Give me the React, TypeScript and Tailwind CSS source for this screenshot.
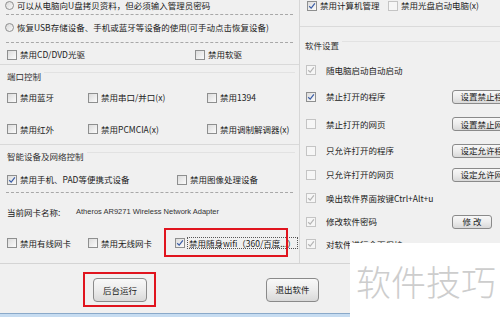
import clsx from "clsx"

function Box({ checked = false, light = false }: { checked?: boolean; light?: boolean }) {
  return (
    <span
      className={clsx(
        "inline-flex h-[10px] w-[10px] shrink-0 items-center justify-center border",
        light ? "border-[#c4c4c4] bg-[#f6f6f6]" : "border-[#8e8f8f] bg-gradient-to-br from-[#dcdcdc] to-[#fbfbfb]"
      )}
    >
      {checked && (
        <svg viewBox="0 0 10 10" className="h-[8px] w-[8px]">
          <path d="M1.5 5.3 L4 7.7 L8.6 1.8" fill="none" stroke={light ? "#b5b5b5" : "#3a5da6"} strokeWidth="1.5" />
        </svg>
      )}
    </span>
  )
}

function Radio() {
  return <span className="inline-block h-[9px] w-[9px] shrink-0 rounded-full border border-[#8e8f8f] bg-gradient-to-br from-[#d8d8d8] to-[#fafafa]" />
}

function Check({ label, checked = false, className }: { label: string; checked?: boolean; className?: string }) {
  return (
    <div className={clsx("flex items-center gap-[3px]", className)}>
      <Box checked={checked} />
      <span>{label}</span>
    </div>
  )
}

function Heading({ text }: { text: string }) {
  return (
    <div className="flex items-center gap-[3px] pr-[4px]">
      <span className="text-[#333]">{text}</span>
      <span className="mb-[8px] h-px flex-1 bg-[#e2e2e2]" />
    </div>
  )
}

function Btn({ text, className }: { text: string; className?: string }) {
  return (
    <div
      className={clsx(
        "flex shrink-0 items-center justify-center rounded-[3px] border border-[#8a8a8a] bg-gradient-to-b from-[#f8f8f8] via-[#ececec] to-[#d9d9d9] text-[#222]",
        className
      )}
    >
      {text}
    </div>
  )
}

const rightRows = [
  { h: "h-[26px]", label: "随电脑启动自动启动", checked: true, light: true, btn: "" },
  { h: "h-[27px]", label: "禁止打开的程序", checked: true, light: false, btn: "设置禁止程序" },
  { h: "h-[28px]", label: "禁止打开的网页", checked: false, light: true, btn: "设置禁止网页" },
  { h: "h-[25px]", label: "只允许打开的程序", checked: false, light: true, btn: "设定允许程序" },
  { h: "h-[23px]", label: "只允许打开的网页", checked: false, light: true, btn: "设定允许网页" },
  { h: "h-[24px]", label: "唤出软件界面按键Ctrl+Alt+u", checked: true, light: true, btn: "" },
  { h: "h-[23px]", label: "修改软件密码", checked: true, light: true, btn: "修 改" },
  { h: "h-[22px]", label: "对软件进行全面保护", checked: true, light: true, btn: "" },
]

export default function App() {
  return (
    <div className="relative h-[317px] w-[500px] overflow-hidden bg-[#f0f0f0] font-['Noto_Sans_CJK_SC',sans-serif] text-[8.5px] leading-none text-[#222]">
      <div className="flex h-[264px] border-b border-[#d4d4d4]">
        {/* left column */}
        <div className="flex w-[300px] shrink-0 flex-col border-r border-[#d6d6d6]">
          <div className="flex h-[14px] items-center gap-[3px] pb-[3px] pl-[5px]">
            <Radio />
            <span>可以从电脑向U盘拷贝资料，但必须输入管理员密码</span>
          </div>
          <div className="mx-[6px] border-t border-dashed border-[#a8a8a8]" />
          <div className="flex h-[27px] items-center gap-[3px] pb-[3px] pl-[5px]">
            <Radio />
            <span className="whitespace-nowrap">恢复USB存储设备、手机或蓝牙等设备的使用(可手动点击恢复设备)</span>
          </div>
          <div className="mx-[6px] border-t border-dashed border-[#a8a8a8]" />
          <div className="flex h-[21px] items-center pt-[2px] pl-[7px]">
            <Check label="禁用CD/DVD光驱" className="w-[188px]" />
            <Check label="禁用软驱" />
          </div>
          <div className="border-t border-[#d9d9d9]" />
          <div className="flex h-[22px] flex-col justify-center pl-[7px]">
            <Heading text="端口控制" />
          </div>
          <div className="flex h-[21px] items-center pl-[7px]">
            <Check label="禁用蓝牙" className="w-[81px]" />
            <Check label="禁用串口/并口(x)" className="w-[119px]" />
            <Check label="禁用1394" />
          </div>
          <div className="flex h-[36px] items-center pt-[6px] pl-[7px]">
            <Check label="禁用红外" className="w-[81px]" />
            <Check label="禁用PCMCIA(x)" className="w-[119px]" />
            <Check label="禁用调制解调器(x)" />
          </div>
          <div className="border-t border-[#d9d9d9]" />
          <div className="flex h-[22px] flex-col justify-center pl-[7px]">
            <Heading text="智能设备及网络控制" />
          </div>
          <div className="flex h-[25px] items-center pl-[7px]">
            <Check label="禁用手机、PAD等便携式设备" checked className="w-[170px]" />
            <Check label="禁用图像处理设备" />
          </div>
          <div className="mx-[6px] border-t border-dashed border-[#a8a8a8]" />
          <div className="flex h-[38px] items-center pl-[7px]">
            <span className="w-[69px]">当前网卡名称:</span>
            <span className="font-['Liberation_Sans',sans-serif] text-[7.5px] text-[#333]">Atheros AR9271 Wireless Network Adapter</span>
          </div>
          <div className="flex h-[32px] items-start pl-[7px]">
            <Check label="禁用有线网卡" className="h-[24px] w-[81px]" />
            <Check label="禁用无线网卡" className="h-[24px] w-[87px]" />
            <div className="relative flex h-[24px] items-center gap-[2px]">
              <Box checked />
              <span className="border border-dotted border-[#555] px-[1px] py-[1px]">禁用随身wifi（360/百度...）</span>
              <div className="absolute -left-[11px] -top-[3px] h-[29px] w-[124px] border-2 border-[#e0141e]" />
            </div>
          </div>
        </div>

        {/* right column */}
        <div className="flex flex-1 flex-col">
          <div className="h-[27px] border-b border-[#dadada]">
            <div className="flex h-[14px] items-center pb-[3px] pl-[7px]">
              <Check label="禁用计算机管理" checked className="w-[81px]" />
              <div className="flex items-center gap-[3px]">
                <Box light />
                <span>禁用光盘启动电脑(x)</span>
              </div>
            </div>
          </div>
          <div className="flex h-[30px] flex-col justify-center pt-[6px] pl-[5px]">
            <Heading text="软件设置" />
          </div>
          {rightRows.map((r) => (
            <div key={r.label} className={clsx("flex items-center pl-[6px]", r.h)}>
              <div className="flex w-[146px] shrink-0 items-center gap-[10px]">
                <Box checked={r.checked} light={r.light} />
                <span className="whitespace-nowrap">{r.label}</span>
              </div>
              {r.btn && <Btn text={r.btn} className={clsx("h-[14px]", r.btn === "修 改" ? "w-[40px]" : "w-[68px]")} />}
            </div>
          ))}
        </div>
      </div>

      {/* bottom bar */}
      <div className="flex h-[49px] items-center pt-[2px] pl-[83px]">
        <div className="flex h-[35px] w-[73px] items-start border-2 border-[#e0141e] pt-[4px] pl-[8px]">
          <Btn text="后台运行" className="h-[24px] w-[54px] rounded-[4px]" />
        </div>
        <Btn text="退出软件" className="ml-[110px] h-[24px] w-[53px] rounded-[4px]" />
      </div>
      <div className="h-px bg-[#8aa9c9]" />
      <div className="h-[3px] bg-[#c6dcf1]" />

      {/* watermark */}
      <div className="absolute bottom-0 right-0 flex h-[74px] w-[150px] items-center bg-white pl-[6px] text-[35px] font-light text-[#cdcdcd]">
        软件技巧
      </div>
    </div>
  )
}
